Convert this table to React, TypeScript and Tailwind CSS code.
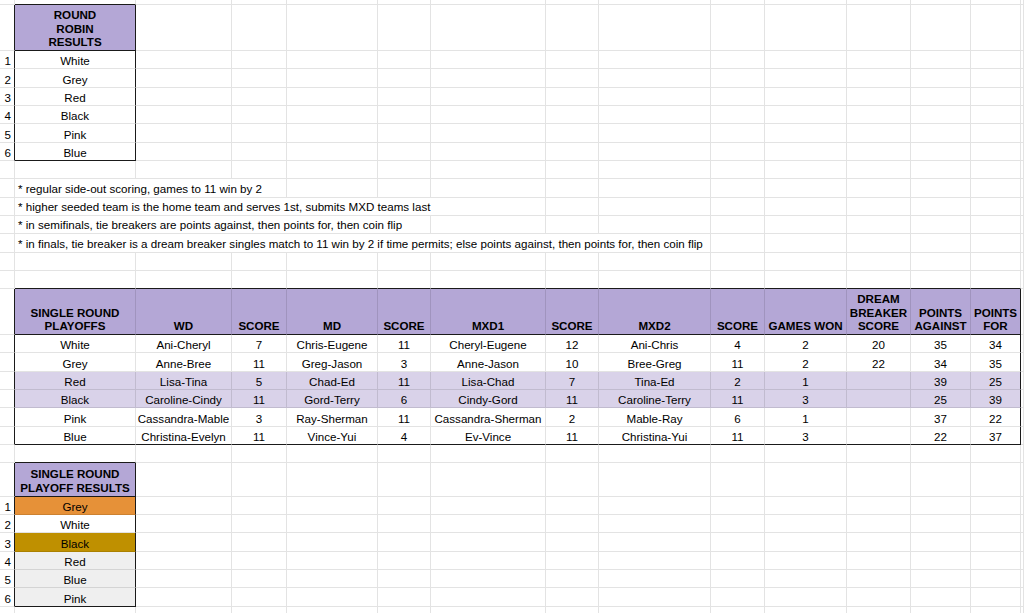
import { clsx } from "clsx";
import type { ReactNode } from "react";

// column template of the visible sheet (row-number col, A..M, then the cut-off N)
const GRID =
	"grid grid-cols-[15px_121px_96px_55px_91px_53px_115px_53px_112px_54px_82px_64px_60px_50px_1fr]";

type Cell = {
	t?: ReactNode;
	k?: "num" | "val" | "head" | "note";
	bg?: string;
	rd?: boolean; // dark right border
	bd?: boolean; // dark bottom border
	n?: number; // columns spanned
};

type Row = { h: string; cells: Cell[] };

const PURPLE = "bg-[#b4a7d6]";
const LILAC = "bg-[#d9d2e9]";

const SPAN: Record<number, string> = {
	3: "col-span-3",
	5: "col-span-5",
	6: "col-span-6",
	8: "col-span-8",
};

const line = (h: string, set: Record<number, Cell> = {}): Row => ({
	h,
	cells: Array.from({ length: 15 }, (_, i) => set[i] ?? {}),
});

const note = (text: string, n: number): Row => {
	const cells: Cell[] = [{}, { t: text, k: "note", n }];
	for (let i = 1 + n; i < 15; i++) cells.push({});
	return { h: "h-[18.33px]", cells };
};

const roundRobin = ["White", "Grey", "Red", "Black", "Pink", "Blue"];

const playoffs = [
	["White", "Ani-Cheryl", "7", "Chris-Eugene", "11", "Cheryl-Eugene", "12", "Ani-Chris", "4", "2", "20", "35", "34"],
	["Grey", "Anne-Bree", "11", "Greg-Jason", "3", "Anne-Jason", "10", "Bree-Greg", "11", "2", "22", "34", "35"],
	["Red", "Lisa-Tina", "5", "Chad-Ed", "11", "Lisa-Chad", "7", "Tina-Ed", "2", "1", "", "39", "25"],
	["Black", "Caroline-Cindy", "11", "Gord-Terry", "6", "Cindy-Gord", "11", "Caroline-Terry", "11", "3", "", "25", "39"],
	["Pink", "Cassandra-Mable", "3", "Ray-Sherman", "11", "Cassandra-Sherman", "2", "Mable-Ray", "6", "1", "", "37", "22"],
	["Blue", "Christina-Evelyn", "11", "Vince-Yui", "4", "Ev-Vince", "11", "Christina-Yui", "11", "3", "", "22", "37"],
];

const playoffHeads: ReactNode[] = [
	<>SINGLE ROUND<br />PLAYOFFS</>,
	"WD",
	"SCORE",
	"MD",
	"SCORE",
	"MXD1",
	"SCORE",
	"MXD2",
	"SCORE",
	"GAMES WON",
	<>DREAM<br />BREAKER<br />SCORE</>,
	<>POINTS<br />AGAINST</>,
	<>POINTS<br />FOR</>,
];

const finalResults = [
	{ t: "Grey", bg: "bg-[#e69138]" },
	{ t: "White", bg: "bg-white" },
	{ t: "Black", bg: "bg-[#bf9000]" },
	{ t: "Red", bg: "bg-[#efefef]" },
	{ t: "Blue", bg: "bg-[#efefef]" },
	{ t: "Pink", bg: "bg-[#efefef]" },
];

const buildRows = (): Row[] => {
	const rows: Row[] = [];

	rows.push(line("h-[5px]", { 1: { bd: true } }));
	rows.push(
		line("h-[46px]", {
			0: { rd: true },
			1: { t: <>ROUND<br />ROBIN<br />RESULTS</>, k: "head", bg: PURPLE, rd: true, bd: true },
		}),
	);
	roundRobin.forEach((team, i) =>
		rows.push(
			line("h-[18.33px]", {
				0: { t: i + 1, k: "num", rd: true },
				1: { t: team, k: "val", rd: true, bd: i === 5 },
			}),
		),
	);

	rows.push(line("h-[18.33px]"));
	rows.push(note("* regular side-out scoring, games to 11 win by 2", 3));
	rows.push(note("* higher seeded team is the home team and serves 1st, submits MXD teams last", 6));
	rows.push(note("* in semifinals, tie breakers are points against, then points for, then coin flip", 5));
	rows.push(
		note(
			"* in finals, tie breaker is a dream breaker singles match to 11 win by 2 if time permits; else points against, then points for, then coin flip",
			8,
		),
	);
	rows.push(line("h-[18.33px]"));

	const topEdge: Record<number, Cell> = {};
	for (let j = 1; j <= 13; j++) topEdge[j] = { bd: true };
	rows.push(line("h-[18.33px]", topEdge));

	const head: Record<number, Cell> = { 0: { rd: true } };
	playoffHeads.forEach((t, j) => {
		head[j + 1] = { t, k: "head", bg: PURPLE, bd: true, rd: j === 12 };
	});
	rows.push(line("h-[45.7px]", head));

	playoffs.forEach((r, i) => {
		const set: Record<number, Cell> = { 0: { rd: true } };
		const bg = i === 2 || i === 3 ? LILAC : "bg-white";
		r.forEach((t, j) => {
			set[j + 1] = { t, k: "val", bg, bd: i === 5, rd: j === 12 };
		});
		rows.push(line("h-[18.33px]", set));
	});

	rows.push(line("h-[18.33px]", { 1: { bd: true } }));
	rows.push(
		line("h-[33.3px]", {
			0: { rd: true },
			1: { t: <>SINGLE ROUND<br />PLAYOFF RESULTS</>, k: "head", bg: PURPLE, rd: true, bd: true },
		}),
	);
	finalResults.forEach((f, i) =>
		rows.push(
			line("h-[18.33px]", {
				0: { t: i + 1, k: "num", rd: true },
				1: { t: f.t, k: "val", bg: f.bg, rd: true, bd: i === 5 },
			}),
		),
	);
	rows.push(line("h-[10px]"));

	return rows;
};

const SheetCell = ({ c }: { c: Cell }) => (
	<div
		className={clsx(
			"flex min-w-0 border-r border-b text-[11.6px] text-black whitespace-nowrap",
			c.rd ? "border-r-[#1a1a1a]" : "border-r-black/[0.11]",
			c.bd ? "border-b-[#1a1a1a]" : "border-b-black/[0.11]",
			c.bg,
			c.n && SPAN[c.n],
			c.k === "num" && "items-end justify-end pr-[3px] pb-0 leading-[14px]",
			c.k === "val" && "items-end justify-center pb-0 leading-[14px]",
			c.k === "head" && "items-end justify-center text-center font-bold pb-[1px] leading-[13.7px]",
			c.k === "note" && "items-end pl-[3px] pb-[1px] leading-[14px]",
		)}
	>
		{c.t}
	</div>
);

export default function App() {
	const rows = buildRows();
	return (
		<div className="w-[1024px] h-[613px] overflow-hidden bg-white font-['Liberation_Sans',Arial,sans-serif]">
			{rows.map((row, i) => (
				<div key={i} className={clsx(GRID, row.h)}>
					{row.cells.map((c, j) => (
						<SheetCell key={j} c={c} />
					))}
				</div>
			))}
		</div>
	);
}
